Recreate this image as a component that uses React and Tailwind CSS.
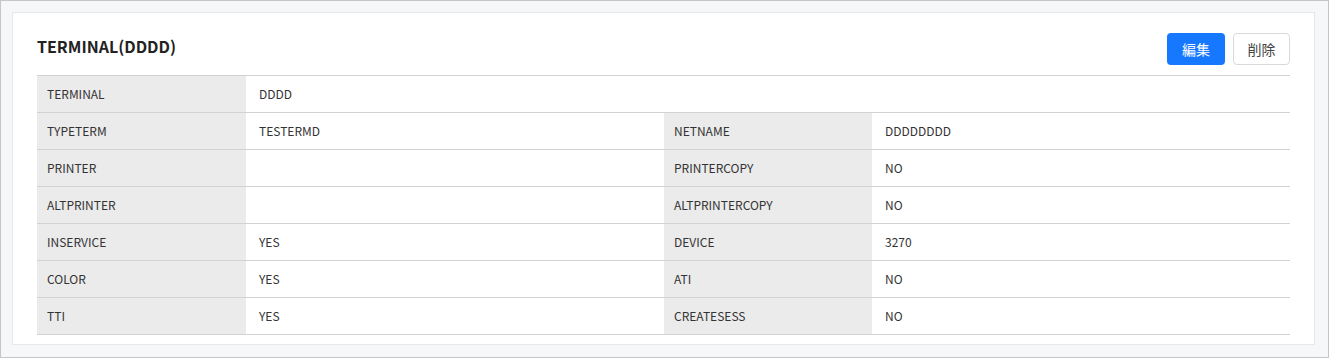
import React from "react";

const rows = [
  [["TERMINAL", "DDDD"]],
  [["TYPETERM", "TESTERMD"], ["NETNAME", "DDDDDDDD"]],
  [["PRINTER", ""], ["PRINTERCOPY", "NO"]],
  [["ALTPRINTER", ""], ["ALTPRINTERCOPY", "NO"]],
  [["INSERVICE", "YES"], ["DEVICE", "3270"]],
  [["COLOR", "YES"], ["ATI", "NO"]],
  [["TTI", "YES"], ["CREATESESS", "NO"]],
];

export default function App() {
  return (
    <div
      className="w-[1329px] h-[358px] border border-[#c6c6c6] bg-[#f6f7f9] pt-[11px] pl-[11px] pr-[13px] pb-[12px] text-[#333333]"
      style={{ fontFamily: '"Noto Sans CJK JP", "Noto Sans", sans-serif' }}
    >
      <div className="h-full border border-[#e6e8eb] bg-white pl-[24px] pr-[24px] pt-[20px]">
        <div className="flex items-start justify-between h-[43px] border-b border-[#d2d2d2]">
          <h1 className="text-[16px] font-bold leading-[20px] mt-[3px] text-[#222222]">TERMINAL(DDDD)</h1>
          <div className="flex gap-[8px]">
            <button className="w-[58px] h-[32px] rounded-[4px] bg-[#1677ff] text-white text-[14px] leading-none">編集</button>
            <button className="w-[57px] h-[32px] rounded-[4px] border border-[#d9d9d9] bg-white text-[#444444] text-[14px] leading-none">削除</button>
          </div>
        </div>
        <div className="grid grid-cols-[209px_418px_208px_418px] text-[12px]">
          {rows.map((r, i) => (
            <React.Fragment key={i}>
              {r.length === 1 ? (
                <>
                  <div className="h-[37px] border-b border-[#d2d2d2] bg-[#ebebeb] pl-[10px] flex items-center">{r[0][0]}</div>
                  <div className="col-span-3 h-[37px] border-b border-[#d2d2d2] pl-[13px] flex items-center">{r[0][1]}</div>
                </>
              ) : (
                r.map(([k, v], j) => (
                  <React.Fragment key={j}>
                    <div className="h-[37px] border-b border-[#d2d2d2] bg-[#ebebeb] pl-[10px] flex items-center">{k}</div>
                    <div className="h-[37px] border-b border-[#d2d2d2] pl-[13px] flex items-center">{v}</div>
                  </React.Fragment>
                ))
              )}
            </React.Fragment>
          ))}
        </div>
      </div>
    </div>
  );
}
